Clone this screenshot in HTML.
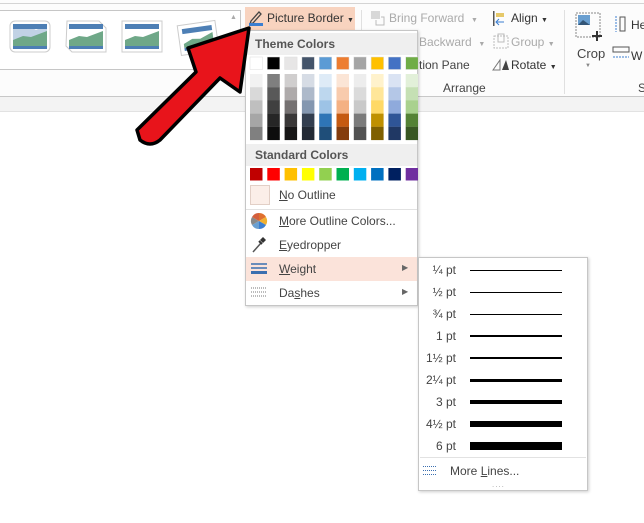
<!DOCTYPE html>
<html><head><meta charset="utf-8"><style>
*{margin:0;padding:0;box-sizing:border-box}
body{width:644px;height:523px;overflow:hidden;background:#fff;font-family:"Liberation Sans",sans-serif;font-size:12px;color:#444;position:relative}
.a{position:absolute}
.t{position:absolute;white-space:nowrap}
u{text-decoration:underline}
</style></head><body>
<!-- ribbon -->
<div class="a" style="left:0;top:0;width:644px;height:96px;background:#fcfcfc"></div>
<div class="a" style="left:0;top:3px;width:644px;height:1px;background:#d4d4d4"></div>
<div class="a" style="left:0;top:96px;width:644px;height:1px;background:#c8c8c8"></div>
<div class="a" style="left:0;top:97px;width:644px;height:14px;background:#f3f3f3"></div>
<div class="a" style="left:0;top:111px;width:644px;height:1px;background:#e2e2e2"></div>
<!-- gallery -->
<div class="a" style="left:-1px;top:10px;width:242px;height:60px;border:1px solid #c6c6c6;background:#fff"></div>
<div class="t" style="left:230px;top:14px;font-size:7px;color:#aaa">▲</div>
<svg class="a" style="left:0;top:0" width="240" height="70">
<g>
<rect x="10" y="21" width="40" height="31" rx="5" fill="#fff" stroke="#ccc"/>
<rect x="13" y="24" width="34" height="5" fill="#4d7fb5"/><path d="M13 29 q6 -4 11 0 q6 -3 12 1 q5 -3 11 -1 v8 l-34 6z" fill="#4d7fb5" opacity=".35"/>
<path d="M13 40 l10 -4 l8 1 l16 -6 v15 h-34z" fill="#6fa888"/><rect x="13" y="46" width="34" height="3" fill="#4d7fb5"/>
</g>
<g transform="translate(56,0)">
<path d="M11 21 h32 l7 7 v24 h-34 l-6 -6z" fill="#fff" stroke="#ccc"/>
<rect x="13" y="24" width="34" height="5" fill="#4d7fb5"/>
<path d="M13 40 l10 -4 l8 1 l16 -6 v15 h-34z" fill="#6fa888"/><rect x="13" y="46" width="34" height="3" fill="#4d7fb5"/>
</g>
<g transform="translate(112,0)">
<rect x="10" y="21" width="40" height="31" fill="#fff" stroke="#ccc"/>
<rect x="13" y="24" width="34" height="5" fill="#4d7fb5"/>
<path d="M13 40 l10 -4 l8 1 l16 -6 v15 h-34z" fill="#6fa888"/><rect x="13" y="46" width="34" height="3" fill="#4d7fb5"/>
</g>
<g transform="rotate(-8 198 37)">
<rect x="179" y="23" width="38" height="30" fill="#fff" stroke="#ccc"/>
<rect x="183" y="27" width="30" height="5" fill="#4d7fb5"/>
<path d="M183 42 l9 -4 l8 1 l13 -5 v12 h-30z" fill="#6fa888"/><rect x="183" y="46" width="30" height="3" fill="#4d7fb5"/>
</g>
</svg>
<!-- Picture border btn -->
<div class="a" style="left:245px;top:7px;width:110px;height:24px;background:#f8d3bf"></div>
<svg class="a" style="left:248px;top:9px" width="16" height="18"><path d="M3 12 L11 3 L13 5 L5 14 L2 15z" fill="none" stroke="#444" stroke-width="1.3"/><rect x="1" y="14" width="14" height="3" fill="#3b7ed1"/></svg>
<div class="t" style="left:267px;top:11px;color:#333">Picture Border <span style="font-size:7px">▼</span></div>
<div class="a" style="left:361px;top:10px;width:1px;height:84px;background:#e0e0e0"></div>
<!-- arrange -->
<svg class="a" style="left:370px;top:10px" width="18" height="18"><rect x="1" y="1" width="9" height="8" fill="#d8d8d8"/><path d="M6 10 v5 h8 v-8 h-3" fill="none" stroke="#bbb"/></svg>
<div class="t" style="left:389px;top:11px;color:#aaa">Bring Forward &nbsp;<span style="font-size:7px">▼</span></div>
<div class="t" style="left:419px;top:35px;color:#aaa">Backward &nbsp;<span style="font-size:7px">▼</span></div>
<div class="t" style="left:419px;top:58px;color:#444">tion Pane</div>
<svg class="a" style="left:492px;top:10px" width="16" height="18"><rect x="1" y="1" width="1.5" height="15" fill="#555"/><rect x="4" y="3" width="8" height="4" fill="#e6c96a"/><path d="M12 12 h-8 m3 -3 l-3 3 l3 3" stroke="#3b7ed1" fill="none"/></svg>
<div class="t" style="left:511px;top:11px;color:#333">Align <span style="font-size:7px">▼</span></div>
<svg class="a" style="left:492px;top:33px" width="18" height="18"><rect x="2" y="3" width="14" height="12" fill="none" stroke="#bbb" stroke-dasharray="2 1"/><rect x="6" y="1" width="6" height="8" fill="none" stroke="#bbb"/></svg>
<div class="t" style="left:511px;top:35px;color:#aaa">Group <span style="font-size:7px">▼</span></div>
<svg class="a" style="left:492px;top:56px" width="18" height="16"><path d="M1 14 L8 4 v10z" fill="none" stroke="#777"/><path d="M10 14 L14 4 L17 14z" fill="#444"/></svg>
<div class="t" style="left:511px;top:58px;color:#333">Rotate <span style="font-size:7px">▼</span></div>
<div class="t" style="left:443px;top:81px;color:#444">Arrange</div>
<div class="a" style="left:564px;top:10px;width:1px;height:84px;background:#e0e0e0"></div>
<svg class="a" style="left:575px;top:12px" width="32" height="30"><rect x="1" y="1" width="24" height="24" fill="none" stroke="#888" stroke-dasharray="2 1"/><rect x="3" y="3" width="12" height="10" fill="#6a9fd0"/><path d="M3 13 l5 -5 l7 5z" fill="#357"/><path d="M17 24 h10 m-5 -5 v10" stroke="#333" stroke-width="2"/></svg>
<div class="t" style="left:577px;top:46px;color:#444;font-size:13px">Crop</div>
<div class="t" style="left:585px;top:63px;color:#888;font-size:6px">▼</div>
<svg class="a" style="left:613px;top:14px" width="14" height="20"><path d="M3 2 v16" stroke="#3b7ed1" stroke-dasharray="2 1"/><rect x="7" y="3" width="5" height="14" fill="none" stroke="#555"/></svg>
<div class="t" style="left:631px;top:18px;color:#333">He</div>
<svg class="a" style="left:612px;top:46px" width="18" height="16"><rect x="1" y="1" width="16" height="5" fill="none" stroke="#555"/><path d="M1 11 h16" stroke="#3b7ed1" stroke-dasharray="2 1"/></svg>
<div class="t" style="left:631px;top:49px;color:#333">W</div>
<div class="t" style="left:638px;top:81px;color:#444">S</div>

<!-- dropdown -->
<div class="a" style="left:245px;top:30px;width:173px;height:276px;background:#fff;border:1px solid #c6c6c6;box-shadow:1px 1px 3px rgba(0,0,0,.2)"></div>
<div class="a" style="left:246px;top:33px;width:171px;height:22px;background:#efefef"></div>
<div class="t" style="left:255px;top:37px;font-weight:bold;color:#555">Theme Colors</div>
<svg class="a" style="left:245px;top:55px" width="173" height="90" id="tc"></svg>
<div class="a" style="left:246px;top:144px;width:171px;height:22px;background:#efefef"></div>
<div class="t" style="left:255px;top:148px;font-weight:bold;color:#555">Standard Colors</div>
<svg class="a" style="left:245px;top:165px" width="173" height="20" id="sc"></svg>
<div class="a" style="left:250px;top:185px;width:20px;height:20px;background:#fbeee8;border:1px solid #e2cfc6"></div>
<div class="t" style="left:279px;top:188px;color:#444"><u>N</u>o Outline</div>
<div class="a" style="left:246px;top:209px;width:171px;height:1px;background:#e2e2e2"></div>
<svg class="a" style="left:250px;top:212px" width="18" height="18"><g transform="translate(9 9)"><path d="M0 0 L0 -8 A8 8 0 0 1 7 -4z" fill="#e0702f"/><path d="M0 0 L7 -4 A8 8 0 0 1 7 4z" fill="#f0b030"/><path d="M0 0 L7 4 A8 8 0 0 1 0 8z" fill="#3b7ed1"/><path d="M0 0 L0 8 A8 8 0 0 1 -7 4z" fill="#6a9fd0"/><path d="M0 0 L-7 4 A8 8 0 0 1 -7 -4z" fill="#888"/><path d="M0 0 L-7 -4 A8 8 0 0 1 0 -8z" fill="#d45f3c"/></g></svg>
<div class="t" style="left:279px;top:214px;color:#444"><u>M</u>ore Outline Colors...</div>
<svg class="a" style="left:251px;top:236px" width="16" height="18"><path d="M2 16 L10 7" stroke="#555" stroke-width="1.5"/><path d="M9 4 L12 1 L15 4 L12 7z" fill="#333"/><path d="M8 5 l3 3" stroke="#333" stroke-width="2"/></svg>
<div class="t" style="left:279px;top:238px;color:#444"><u>E</u>yedropper</div>
<div class="a" style="left:246px;top:257px;width:171px;height:24px;background:#fbe3da"></div>
<svg class="a" style="left:250px;top:261px" width="18" height="16"><path d="M1 3 h16 M1 7 h16" stroke="#3b6fb0" stroke-width="1.5"/><rect x="1" y="10" width="16" height="3" fill="#3b6fb0"/></svg>
<div class="t" style="left:279px;top:262px;color:#444"><u>W</u>eight</div>
<div class="t" style="left:402px;top:263px;font-size:8px;color:#666">▶</div>
<svg class="a" style="left:250px;top:286px" width="18" height="14"><path d="M1 2 h16 M1 6 h16 M1 10 h16" stroke="#777" stroke-dasharray="1 1"/></svg>
<div class="t" style="left:279px;top:286px;color:#444">Da<u>s</u>hes</div>
<div class="t" style="left:402px;top:287px;font-size:8px;color:#666">▶</div>

<!-- submenu -->
<div class="a" style="left:418px;top:257px;width:170px;height:234px;background:#fff;border:1px solid #c6c6c6;box-shadow:1px 1px 3px rgba(0,0,0,.2)"></div>
<div id="wt"></div>
<div class="a" style="left:420px;top:457px;width:166px;height:1px;background:#e2e2e2"></div>
<svg class="a" style="left:423px;top:465px" width="16" height="12"><path d="M0 1.5 h14 M0 5.5 h14 M0 9.5 h14" stroke="#3b6fb0" stroke-dasharray="1 1"/></svg>
<div class="t" style="left:450px;top:464px;color:#444">More <u>L</u>ines...</div>
<div class="t" style="left:492px;top:480px;color:#aaa;font-size:8px;letter-spacing:1px">....</div>

<!-- arrow -->
<svg class="a" style="left:0;top:0" width="644" height="523">
<path d="M137 130 L196 72 L188 48 L249 28 L240 92 L220 78 L160 140 Q150 148 140 140 Z" fill="#e8141b" stroke="#000" stroke-width="3.5" stroke-linejoin="round"/>
</svg>

<script>
var cols=[["#fff","#f2f2f2","#d9d9d9","#bfbfbf","#a6a6a6","#808080"],["#000","#7f7f7f","#595959","#404040","#262626","#0d0d0d"],["#e7e6e6","#d0cece","#aeaaaa","#757171","#3a3838","#171616"],["#44546a","#d6dce5","#adb9ca","#8497b0","#333f50","#222a35"],["#5b9bd5","#deebf7","#bdd7ee","#9dc3e6","#2e75b6","#1f4e79"],["#ed7d31","#fbe5d6","#f8cbad","#f4b183","#c55a11","#843c0c"],["#a5a5a5","#ededed","#dbdbdb","#c9c9c9","#7b7b7b","#525252"],["#ffc000","#fff2cc","#ffe699","#ffd966","#bf9000","#7f6000"],["#4472c4","#dae3f3","#b4c7e7","#8faadc","#2f5597","#203864"],["#70ad47","#e2f0d9","#c5e0b4","#a9d18e","#548235","#385723"]];
var s="";cols.forEach(function(c,i){var x=5+i*17.3;s+='<rect x="'+x+'" y="2" width="12.5" height="12.5" fill="'+c[0]+'" stroke="#ddd" stroke-width=".5"/>';for(var j=1;j<6;j++)s+='<rect x="'+x+'" y="'+(19+(j-1)*13.2)+'" width="12.5" height="13.3" fill="'+c[j]+'"/>';});
document.getElementById("tc").innerHTML=s;
var st=["#c00000","#ff0000","#ffc000","#ffff00","#92d050","#00b050","#00b0f0","#0070c0","#002060","#7030a0"];s="";
st.forEach(function(c,i){s+='<rect x="'+(5+i*17.3)+'" y="3" width="12.5" height="12.5" fill="'+c+'"/>';});document.getElementById("sc").innerHTML=s;
var w=[["¼ pt",1],["½ pt",1],["¾ pt",1],["1 pt",2],["1½ pt",2],["2¼ pt",3],["3 pt",4],["4½ pt",6],["6 pt",8]];s="";
w.forEach(function(r,i){var y=270+i*22;s+='<div class="t" style="left:400px;width:56px;text-align:right;top:'+(y-7)+'px;color:#444">'+r[0]+'</div><div class="a" style="left:470px;width:92px;top:'+(y-r[1]/2)+'px;height:'+r[1]+'px;background:#000"></div>';});
document.getElementById("wt").innerHTML=s;
</script>
</body></html>
